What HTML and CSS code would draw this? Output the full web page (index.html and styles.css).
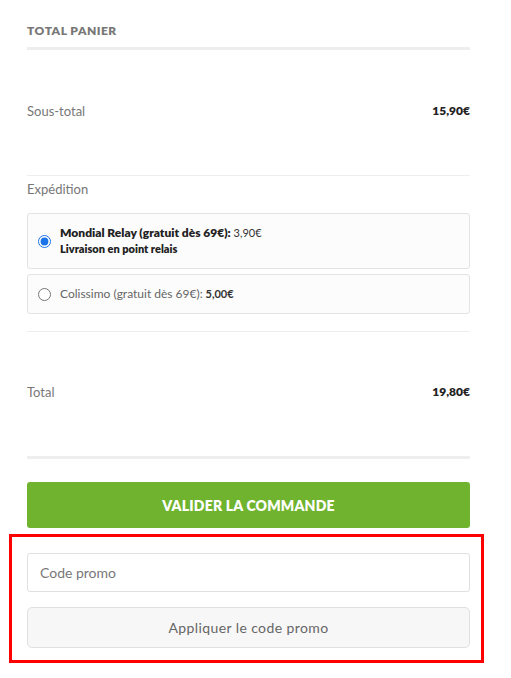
FILE: index.html
```html
<!DOCTYPE html>
<html lang="fr">
<head>
    <meta charset="UTF-8">
    <meta name="viewport" content="width=device-width, initial-scale=1.0">
    <title>Total panier</title>
    <link rel="stylesheet" href="styles.css">
</head>
<body>
    <div class="cart">
        <h2 class="cart-title">Total panier</h2>

        <div class="row subtotal">
            <span class="label">Sous-total</span>
            <span class="amount">15,90€</span>
        </div>

        <div class="shipping">
            <div class="label">Expédition</div>
            <label class="option">
                <input type="radio" name="ship" checked>
                <span class="option-text">
                    <span class="strong">Mondial Relay (gratuit dès 69€):</span> <span class="price">3,90€</span><br>
                    <span class="sub">Livraison en point relais</span>
                </span>
            </label>
            <label class="option">
                <input type="radio" name="ship">
                <span class="option-text">
                    <span class="light">Colissimo (gratuit dès 69€):</span> <span class="price bold">5,00€</span>
                </span>
            </label>
        </div>

        <div class="row total">
            <span class="label">Total</span>
            <span class="amount">19,80€</span>
        </div>

        <button class="checkout">Valider la commande</button>

        <div class="promo">
            <input type="text" class="promo-input" placeholder="Code promo">
            <button class="promo-button">Appliquer le code promo</button>
        </div>
    </div>
</body>
</html>
```

FILE: styles.css
```css
body { margin: 0; background: #fff; font-family: Lato, "Open Sans", sans-serif; color: #222; }
.cart { padding: 0 41px 0 27px; }
.cart-title { margin: 0; padding: 24px 0 9px; font-size: 12px; line-height: 14px; font-weight: 800; text-transform: uppercase; color: #777; letter-spacing: 0.5px; border-bottom: 3px solid #eee; }
.row { display: flex; justify-content: space-between; align-items: center; line-height: 16px; }
.subtotal { padding: 53px 0 56px; border-bottom: 1px solid #eee; }
.total { padding: 52px 0 56px; border-bottom: 3px solid #eee; }
.label { color: #777; font-size: 13px; line-height: 16px; }
.amount { font-size: 12px; font-weight: 800; color: #222; }
.shipping { padding: 5px 0 17px; border-bottom: 1px solid #eee; }
.shipping .label { margin-bottom: 16px; }
.option { display: flex; align-items: center; padding: 11px 10px; border: 1px solid #e3e3e3; border-radius: 3px; background: #fcfcfc; font-size: 11px; line-height: 16px; cursor: pointer; }
.option + .option { margin-top: 5px; }
.option input { margin: 0 9px 0 0; width: 13px; height: 13px; accent-color: #1a73e8; }
.option-text { color: #222; }
.strong { font-weight: 800; font-size: 12px; }
.sub { font-weight: 800; }
.light { color: #666; font-size: 12px; }
.price { color: #333; }
.bold { font-weight: 700; }
.checkout { display: block; width: 100%; margin-top: 23px; height: 46px; border: 0; border-radius: 3px; background: #6fb32e; color: #fff; font-family: inherit; font-size: 14px; font-weight: 800; text-transform: uppercase; letter-spacing: 0.2px; cursor: pointer; }
.promo { margin: 6px -14px 0 -18px; padding: 16px 11px 12px 15px; border: 3px solid #ff0000; }
.promo-input { display: block; box-sizing: border-box; width: 100%; height: 39px; padding: 0 12px; border: 1px solid #e0e0e0; border-radius: 3px; font-family: inherit; font-size: 14px; color: #333; }
.promo-input::placeholder { color: #777; }
.promo-button { display: block; width: 100%; height: 41px; margin-top: 15px; border: 1px solid #e0e0e0; border-radius: 5px; background: #f7f7f7; color: #666; font-family: inherit; font-size: 14px; letter-spacing: 0.4px; cursor: pointer; }
```
